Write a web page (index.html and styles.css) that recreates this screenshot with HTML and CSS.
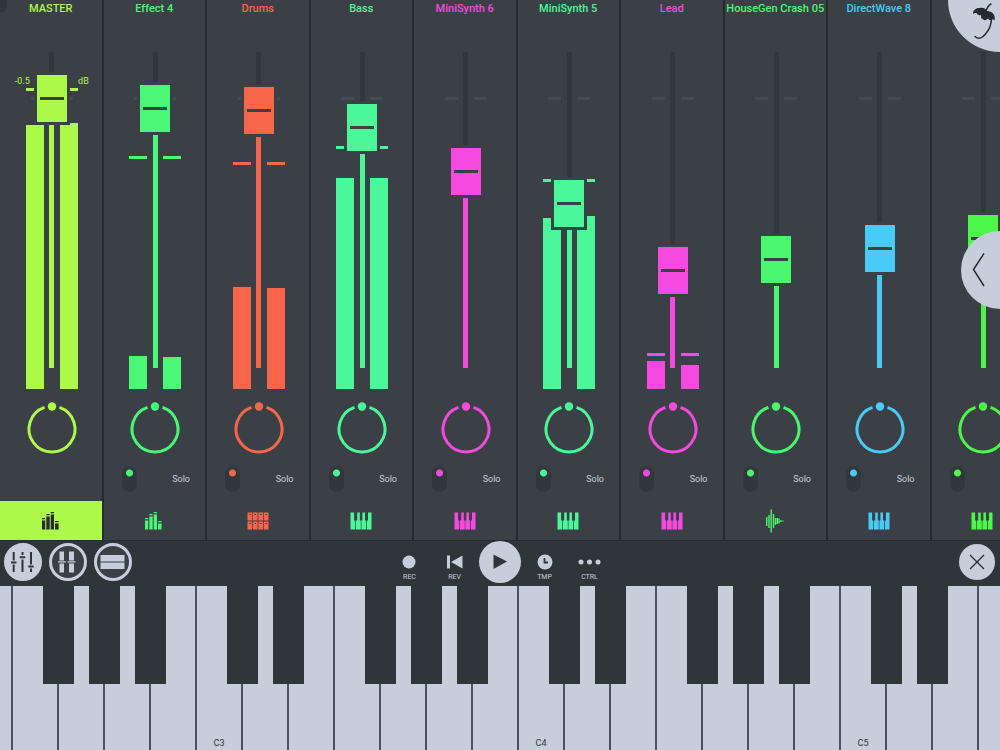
FILE: index.html
```html
<!DOCTYPE html>
<html lang="en">
<head>
	<meta charset="utf-8">
	<meta name="viewport" content="width=device-width, initial-scale=1">
	<title>Mixer</title>
	<link rel="stylesheet" href="styles.css">
</head>
<body>
	<svg class="sprite" aria-hidden="true">
		<symbol id="i-bars" viewBox="0 0 22 18">
			<path d="M2 8.500h3.200v9H2zM2 6h3.200v1.200H2zM6.300 4.500h3.400v13H6.300zM6.300 2h3.400v1.200H6.300zM10.700 2.500H14v15h-3.300zM10.700 0H14v1.200h-3.300zM15 11.500h3.600v6H15zM15 9h3.600v1.200H15z"/>
		</symbol>
		<symbol id="i-keys" viewBox="0 0 22 18">
			<path d="M.5 .5h3.600v8h1.200v9H.5zM6 8.500h1.200v-8h2.600v8h1v9H6zM11.400 8.500h1v-8H15v8h1v9h-4.600zM16.800 8.500h1.200v-8h3.500v17h-4.700z"/>
		</symbol>
		<symbol id="i-pads" viewBox="0 0 22 18">
			<path d="M.5 .5h4.700v8H.5zM5.900 .5h4.700v8H5.900zM11.400 .5h4.700v8h-4.700zM16.800 .5h4.700v8h-4.700zM.5 9.500h4.700v8H.5zM5.900 9.500h4.700v8H5.900zM11.400 9.500h4.700v8h-4.700zM16.800 9.500h4.700v8h-4.700z"/>
			<path d="M2.200 2.500h1.500M7.500 2.500H9M13 2.500h1.500M18.500 2.500H20M2.200 11.500h1.500M7.500 11.500H9M13 11.500h1.500M18.500 11.500H20" stroke="#3a4045"/>
		</symbol>
		<symbol id="i-wave" viewBox="0 0 22 24">
			<path d="M2.700 8v9M5 6v13M7.200 .5v23M9.500 5v14M11.500 9v7M13.300 9v6M15 9.500v5M17 11v2M19 11.500v1" stroke="currentColor" stroke-width="1.400" fill="none"/>
		</symbol>
	</svg>

	<main class="mixer" id="mixer">
		<button class="corner" aria-label="Menu"></button>
		<button class="logo" aria-label="About">
			<svg viewBox="0 0 52 52">
				<path d="M25 14C25 10 28 7.500 32 8C35 7 38 9 39 11C44 11 48 15 46.500 20.500Q45 18.500 43.500 19.500Q41.500 21 40 18.500Q37 21.500 34.500 19Q32.500 18 33 15Q30 16 28.500 13Q26.500 12.500 25 14z"/>
				<path d="M43 4Q39.500 6 38 11M43.500 19Q43 28 37.500 34Q32 41 27 36.500" fill="none" stroke="#252b30" stroke-width="1.500" stroke-linecap="round"/>
			</svg>
		</button>
		<button class="expand" aria-label="Show panel">
			<svg viewBox="0 0 39 78"><path d="M23 22.500L12.500 38.500L23 55" fill="none" stroke="#252b30" stroke-width="1.500"/></svg>
		</button>
	</main>

	<nav class="toolbar">
		<div class="views">
			<button class="round filled" aria-label="Mixer">
				<svg viewBox="0 0 38 38"><path d="M9.700 9v8.500M9.700 21.500V29M18.500 9v3M18.500 16.500V29M27 9v12.500M27 25.500V29M7 19.500h5.500M15.700 14.300h5.500M24.200 23.500h5.500"/></svg>
			</button>
			<button class="round" aria-label="Channels">
				<svg viewBox="0 0 38 38"><path class="light" d="M10.500 8.500h4.500v9h-4.500zM20 8.500h5v9h-5zM10.500 20.500h4.500v9h-4.500zM20 20.500h5v9h-5zM9 18.300h8v1.200H9zM18.500 18.300h8v1.200h-8z"/></svg>
			</button>
			<button class="round" aria-label="Playlist">
				<svg viewBox="0 0 38 38"><path class="light" d="M6.500 12h24v6.500h-24zM6.500 19.500h24V26h-24z"/></svg>
			</button>
		</div>
		<div class="transport">
			<button><svg viewBox="0 0 20 20"><circle cx="9" cy="10" r="6.500"/></svg>REC</button>
			<button><svg viewBox="0 0 20 20"><path d="M2 3.500h3v13H2zM17.500 3.500v13L6 10z"/></svg>REV</button>
			<button class="play" aria-label="Play"><svg viewBox="0 0 42 42"><path d="M14.500 13.500L28 20.500L14.500 28z"/></svg></button>
			<button><svg viewBox="0 0 20 20"><circle cx="10" cy="10" r="7.500"/><path d="M9.500 6v4.500H13" fill="none" stroke="#2f3639" stroke-width="1.800"/></svg>TMP</button>
			<button><svg viewBox="0 0 24 20"><circle cx="3" cy="10" r="2.500"/><circle cx="11.500" cy="10" r="2.500"/><circle cx="20" cy="10" r="2.500"/></svg>CTRL</button>
		</div>
		<button class="close" aria-label="Close">
			<svg viewBox="0 0 36 36"><path d="M11 11l14 14M25 11l-14 14"/></svg>
		</button>
	</nav>

	<section class="piano" id="piano" aria-label="Keyboard"></section>

	<script src="script.js"></script>
</body>
</html>
```
FILE: styles.css
```css
*{margin:0;padding:0;box-sizing:border-box;}
body{
	min-height:100vh;
	display:flex;flex-direction:column;
	background:#2f3639;
	color:#c7cedb;
	font-family:Roboto,"Liberation Sans",sans-serif;
	overflow:hidden;
}
button{border:0;background:none;color:inherit;font:inherit;cursor:pointer;}
svg{display:block;}
.sprite{position:absolute;width:0;height:0;}

/* mixer */
.mixer{
	position:relative;
	display:grid;grid-auto-flow:column;grid-auto-columns:10.35%;
	overflow:hidden;
	background:#3a4045;
	border-bottom:1px solid #252b30;
}
.strip{
	color:var(--c);
	border-right:2px solid #252b30;
	display:flex;flex-direction:column;
	min-width:0;
}
.strip h2{
	height:52px;padding-top:1px;
	font-size:11px;line-height:16px;font-weight:500;
	text-align:center;white-space:nowrap;
}
.fader{
	display:grid;justify-items:center;
	height:337px;padding-left:2px;
}
.fader > *{grid-area:1/1;}
.unity{
	width:42px;height:3px;margin-top:45px;
	display:flex;justify-content:space-between;
}
.unity::before,.unity::after{content:"";width:13px;background:#444b50;}
.meters{width:52px;display:flex;justify-content:space-between;}
.meter{width:18px;display:flex;flex-direction:column-reverse;}
.bar{background:var(--c);}
.peak{height:3px;background:var(--c);}
.readout{
	width:74px;margin-top:22px;
	display:flex;justify-content:space-between;
	font-size:9px;line-height:14px;
}
.fader input{
	-webkit-appearance:none;appearance:none;
	writing-mode:vertical-lr;direction:rtl;
	width:36px;height:316px;
	background:linear-gradient(to top,var(--c) var(--fill),#31373b var(--fill)) center/5px 100% no-repeat;
}
.fader input::-webkit-slider-thumb{
	-webkit-appearance:none;
	width:36px;height:53px;
	border:3px solid #3a4045;
	background:linear-gradient(#3a4045,#3a4045) center/24px 3px no-repeat var(--c);
}
.knob{width:58px;height:56px;margin:12px auto 8px;padding-left:2px;}
.knob path{fill:none;stroke:var(--c);stroke-width:3;}
.knob circle{fill:var(--c);}
.solo{
	height:28px;padding:0 15px 0 18px;
	display:flex;justify-content:space-between;align-items:center;
	color:#c7cedb;
}
.solo input{
	-webkit-appearance:none;appearance:none;
	width:15px;height:26px;border-radius:8px;
	background:radial-gradient(circle at 50% 7px,var(--c) 3px,transparent 4px) #31373b;
}
.solo button{font-size:9px;line-height:14px;}
.type{
	height:39px;margin-top:8px;
	display:flex;justify-content:center;align-items:center;
	color:var(--c);
}
.type svg{width:22px;height:18px;fill:currentColor;}
.type svg.wave{height:24px;}
.selected .type{background:var(--c);color:#252b30;}

.corner{
	position:absolute;left:0;top:0;z-index:1;
	width:7px;height:13px;border-radius:0 0 7px 0;
	background:#30363a;
}
.logo,.expand{position:absolute;right:0;z-index:1;background:#c7cedb;}
.logo{top:0;width:52px;height:52px;border-radius:0 0 0 52px;fill:#252b30;}
.expand{top:231px;width:39px;height:78px;border-radius:39px 0 0 39px;}

/* toolbar */
.toolbar{
	display:grid;grid-template-columns:1fr auto 1fr;align-items:center;
	padding:0 5px 3px 4px;
}
.views{display:flex;gap:7px;}
.round{width:38px;height:38px;border-radius:50%;border:3px solid #c7cedb;background:#3a4045;}
.round svg{width:38px;height:38px;margin:-3px;}
.round path{stroke:#2f3639;stroke-width:2;}
.round .light{fill:#c7cedb;stroke:none;}
.filled{background:#c7cedb;}
.transport{display:grid;grid-template-columns:repeat(5,45px);align-items:center;}
.transport button{
	display:flex;flex-direction:column;align-items:center;
	padding-top:10px;
	font-size:7px;line-height:10px;
}
.transport svg{height:20px;fill:#c7cedb;}
.transport .play{
	width:42px;height:42px;padding:0;justify-self:center;
	border-radius:50%;background:#c7cedb;
}
.transport .play svg{height:42px;fill:#2f3639;}
.close{
	justify-self:end;
	width:36px;height:36px;border-radius:50%;background:#c7cedb;
}
.close path{stroke:#252b30;stroke-width:1.3;}

/* piano */
.piano{
	flex:1;min-height:163px;
	display:flex;
	margin-left:-3.3%;
}
.octave-key{position:relative;flex:0 0 calc(100% * 46 / 1033);display:flex;}
.white{
	flex:1;
	display:flex;justify-content:center;align-items:flex-end;
	background:#c7cedb;
	border-right:2px solid #4b525b;
	color:#2f3639;
	font-size:9px;line-height:14px;
}
.black{
	position:absolute;right:-15px;top:0;z-index:1;
	width:31px;height:60%;
	background:#2f3639;
}
```
FILE: script.js
```js
// fader: 0-263, bars and peak: px above the meter floor
var strips = [
	{name:'MASTER', c:'#adf94a', fader:243, bars:[264,266], peak:298, icon:'bars', master:true},
	{name:'Effect 4', c:'#4bf777', fader:233, bars:[33,32], peak:230, icon:'bars', solo:true},
	{name:'Drums', c:'#f7664a', fader:231, bars:[102,101], peak:224, icon:'pads', solo:true},
	{name:'Bass', c:'#4cf799', fader:214, bars:[211,211], peak:240, icon:'keys', solo:true},
	{name:'MiniSynth 6', c:'#f54ae0', fader:170, icon:'keys', solo:true},
	{name:'MiniSynth 5', c:'#4cf799', fader:138, bars:[171,173], peak:207, icon:'keys', solo:true},
	{name:'Lead', c:'#f54ae0', fader:71, bars:[28,24], peak:33, icon:'keys', solo:true},
	{name:'HouseGen Crash 05', c:'#4bf76f', fader:82, icon:'wave', solo:true},
	{name:'DirectWave 8', c:'#4acaf6', fader:93, icon:'keys', solo:true},
	{name:'', c:'#4df74a', fader:103, icon:'keys'}
];

function meter(h, peak){
	return '<div class="meter"><div class="bar" style="height:'+h+'px"></div>'+
		'<div class="peak" style="margin-bottom:'+(peak-h)+'px"></div></div>';
}

function strip(s){
	var label = s.name || 'Channel';
	var html = '<section class="strip'+(s.master ? ' selected' : '')+'" style="--c:'+s.c+'">';
	html += '<h2>'+s.name+'</h2><div class="fader"><div class="unity"></div>';
	if(s.bars){
		html += '<div class="meters">'+meter(s.bars[0], s.peak)+meter(s.bars[1], s.peak)+'</div>';
	}
	if(s.master){
		html += '<div class="readout"><span>-0.5</span><span>dB</span></div>';
	}
	html += '<input type="range" min="0" max="263" value="'+s.fader+'" aria-label="'+label+' volume" style="--fill:'+(s.fader+26)+'px"></div>';
	html += '<svg class="knob" viewBox="0 0 56 56"><path d="M35.5 6.3A23 23 0 1 1 20.5 6.3"/><circle cx="28" cy="5.5" r="4.2"/></svg>';
	html += '<div class="solo">';
	if(!s.master){
		html += '<input type="checkbox" aria-label="'+label+' on">';
	}
	if(s.solo){
		html += '<button>Solo</button>';
	}
	html += '</div><button class="type" aria-label="'+label+'"><svg class="'+s.icon+'"><use href="#i-'+s.icon+'"/></svg></button></section>';
	return html;
}

var mixer = document.getElementById('mixer');
mixer.insertAdjacentHTML('beforeend', strips.map(strip).join(''));
mixer.addEventListener('input', function(e){
	if(e.target.type == 'range'){
		e.target.style.setProperty('--fill', (+e.target.value+26)+'px');
	}
});

// the keyboard starts on the E below C3
var keys = '';
for(var i=0;i<23;i++){
	var note = (i+2)%7;
	var text = note==0 ? 'C'+(3+(i-5)/7) : '';
	keys += '<div class="octave-key"><button class="white">'+text+'</button>';
	if(note!=2 && note!=6){
		keys += '<button class="black"></button>';
	}
	keys += '</div>';
}
document.getElementById('piano').innerHTML = keys;
```
